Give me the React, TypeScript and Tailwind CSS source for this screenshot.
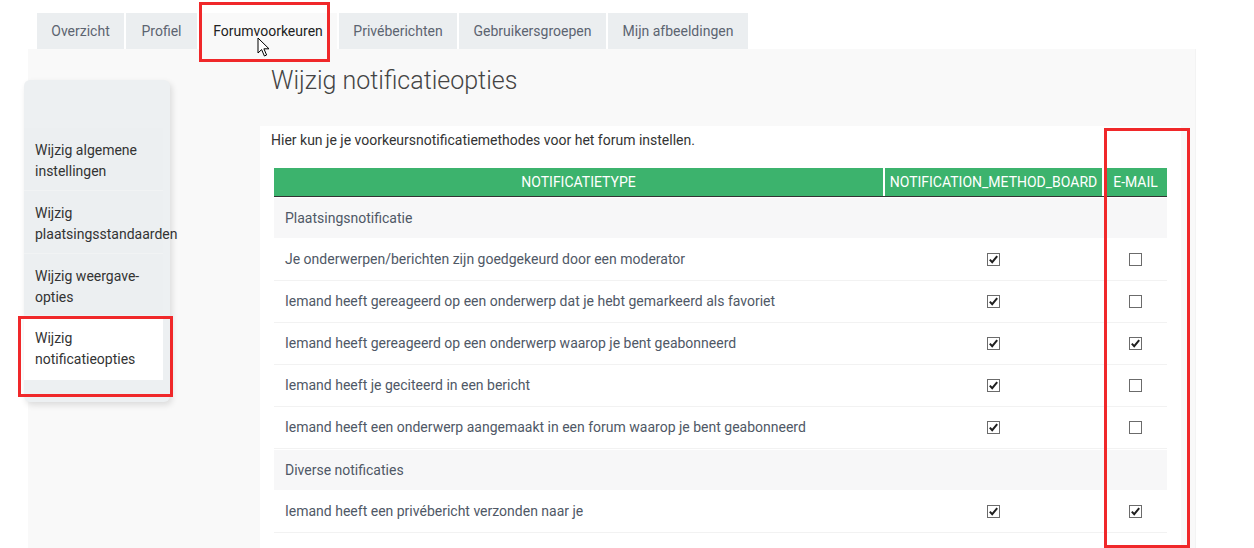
import React from 'react';

const tabs = [
  { label: 'Overzicht', w: 'w-[87px]' },
  { label: 'Profiel', w: 'w-[71px]' },
  { label: 'Forumvoorkeuren', w: 'w-[138px]', active: true },
  { label: 'Privéberichten', w: 'w-[118px]' },
  { label: 'Gebruikersgroepen', w: 'w-[147px]' },
  { label: 'Mijn afbeeldingen', w: 'w-[140px]' },
];

const sideItems = [
  { label: 'Wijzig algemene instellingen', h: 'h-[63px]' },
  { label: 'Wijzig plaatsingsstandaarden', h: 'h-[63px]' },
  { label: 'Wijzig weergave-opties', h: 'h-[62px]' },
  { label: 'Wijzig notificatieopties', h: 'h-[64px]', active: true },
];

type Row =
  | { kind: 'section'; label: string }
  | { kind: 'item'; label: string; board: boolean; email: boolean };

const rows: Row[] = [
  { kind: 'section', label: 'Plaatsingsnotificatie' },
  { kind: 'item', label: 'Je onderwerpen/berichten zijn goedgekeurd door een moderator', board: true, email: false },
  { kind: 'item', label: 'Iemand heeft gereageerd op een onderwerp dat je hebt gemarkeerd als favoriet', board: true, email: false },
  { kind: 'item', label: 'Iemand heeft gereageerd op een onderwerp waarop je bent geabonneerd', board: true, email: true },
  { kind: 'item', label: 'Iemand heeft je geciteerd in een bericht', board: true, email: false },
  { kind: 'item', label: 'Iemand heeft een onderwerp aangemaakt in een forum waarop je bent geabonneerd', board: true, email: false },
  { kind: 'section', label: 'Diverse notificaties' },
  { kind: 'item', label: 'Iemand heeft een privébericht verzonden naar je', board: true, email: true },
];

function Check({ checked }: { checked: boolean }) {
  return (
    <svg width="13" height="13" viewBox="0 0 13 13" className="block">
      <rect x="0.5" y="0.5" width="12" height="12" fill="#fff" stroke="#6b6b6b" />
      {checked && (
        <path d="M2.8 6.6 L5.2 9.2 L10.2 3.2" fill="none" stroke="#1f1f1f" strokeWidth="2" />
      )}
    </svg>
  );
}

function Cursor() {
  return (
    <svg width="14" height="21" viewBox="0 0 14 21" className="block">
      <path
        d="M1 1 L1 16 L4.6 12.6 L7.4 19 L9.6 18 L6.9 11.8 L12 11.8 Z"
        fill="#fff"
        stroke="#000"
        strokeWidth="1"
      />
    </svg>
  );
}

export default function App() {
  return (
    <div className="relative h-[548px] w-[1254px] overflow-hidden bg-white font-['Roboto','Liberation_Sans',sans-serif] text-[14px]">
      <div className="ml-[28px] w-[1168px]">
        {/* tabs */}
        <div className="flex gap-[2px] pl-[9px] pt-[13px]">
          {tabs.map((t) => (
            <div
              key={t.label}
              className={
                t.w +
                (t.active
                  ? ' flex h-[36px] items-center justify-center bg-[#f9f9f9] pt-[1px] text-[#222]'
                  : ' flex h-[36px] items-center justify-center bg-[#ebeef0] pt-[1px] text-[#5c6470]')
              }
            >
              {t.label}
            </div>
          ))}
        </div>

        <div className="flex h-[499px] border-r border-[#f3f3f3] bg-[#f9f9f9]">
          {/* sidebar */}
          <aside className="ml-[-4px] mt-[31px] w-[146px] self-start rounded-[6px] bg-[#edf0f2] pb-[22px] pr-[7px] pt-[48px] shadow-[2px_3px_6px_rgba(0,0,0,0.12)]">
            {sideItems.map((s) => (
              <div
                key={s.label}
                className={
                  (s.active ? 'bg-white ' : 'border-b border-[#f1f3f4] bg-[#eceff1] ') +
                  s.h +
                  ' px-[11px] pt-[12px] leading-[21px] text-[#333]'
                }
              >
                {s.label}
              </div>
            ))}
          </aside>

          {/* main */}
          <main className="ml-[90px] flex flex-1 flex-col">
            <h1 className="mt-[16px] pl-[11px] text-[25px] font-light leading-[32px] text-[#444]">
              Wijzig notificatieopties
            </h1>
            <div className="mr-[14px] mt-[29px] flex-1 bg-white pt-[4px]">
              <p className="pl-[11px] leading-[20px] text-[#333]">
                Hier kun je je voorkeursnotificatiemethodes voor het forum instellen.
              </p>
              <div className="ml-[14px] mt-[18px] w-[893px]">
                <div className="grid grid-cols-[609px_217px_63px] gap-x-[2px] border-b border-[#333] text-white">
                  <div className="flex h-[28px] items-center justify-center bg-[#3cb36d]">NOTIFICATIETYPE</div>
                  <div className="flex h-[28px] items-center justify-center bg-[#3cb36d]">NOTIFICATION_METHOD_BOARD</div>
                  <div className="flex h-[28px] items-center justify-center bg-[#3cb36d]">E-MAIL</div>
                </div>
                {rows.map((r, i) =>
                  r.kind === 'section' ? (
                    <div
                      key={i}
                      className="flex h-[42px] items-center border-y border-white bg-[#f7f7f8] pl-[11px] text-[#4f5866]"
                    >
                      {r.label}
                    </div>
                  ) : (
                    <div
                      key={i}
                      className="grid h-[42px] grid-cols-[609px_217px_63px] gap-x-[2px] border-b border-[#f2f2f2] text-[#4f5866]"
                    >
                      <div className="flex items-center pl-[11px]">{r.label}</div>
                      <div className="flex items-center justify-center">
                        <Check checked={r.board} />
                      </div>
                      <div className="flex items-center justify-center">
                        <Check checked={r.email} />
                      </div>
                    </div>
                  ),
                )}
              </div>
            </div>
          </main>
        </div>
      </div>

      {/* annotation overlays */}
      <div className="pointer-events-none absolute left-[199px] top-[2px] h-[60px] w-[131px] border-[3px] border-[#f0282a]" />
      <div className="pointer-events-none absolute left-[18px] top-[316px] h-[81px] w-[155px] border-[3px] border-[#f0282a]" />
      <div className="pointer-events-none absolute left-[1104px] top-[128px] h-[420px] w-[86px] border-[3px] border-[#f0282a]" />
      <div className="pointer-events-none absolute left-[257px] top-[37px]">
        <Cursor />
      </div>
    </div>
  );
}
